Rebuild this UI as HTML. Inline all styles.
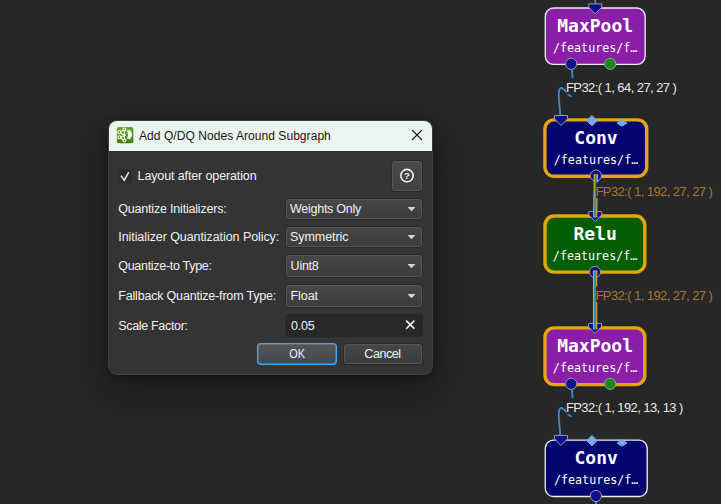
<!DOCTYPE html>
<html><head><meta charset="utf-8"><title>Add Q/DQ Nodes Around Subgraph</title>
<style>
html,body{margin:0;padding:0;}
body{width:721px;height:504px;background:#272727;overflow:hidden;position:relative;font-family:"Liberation Sans",sans-serif;}
svg{position:absolute;left:0;top:0;}
#dlg{position:absolute;left:109px;top:121px;width:322.6px;height:253.2px;background:#343434;border-radius:8px;overflow:hidden;box-shadow:0 0 0 1px rgba(72,72,72,.8),0 2px 8px rgba(0,0,0,.28),0 14px 40px 6px rgba(0,0,0,.36);}
#tb{position:absolute;left:0;top:0;right:0;height:29.7px;background:#ecf4f0;}
#dsvg text{font-family:"Liberation Sans",sans-serif;}
</style></head><body>
<svg id="graph" width="721" height="504" viewBox="0 0 721 504">
<g fill="none" stroke="#3b8bd0" stroke-width="1.8" stroke-linecap="round">
<path d="M595.2,0V5"/>
<path d="M571.2,64C571.8,69 572.3,74 572.7,78.2"/>
<path d="M570.8,96.3C567,94.5 564.3,87.8 561.4,87.8C559.1,87.8 558.5,92 558.8,96.7C559.2,103 560,110 560.3,117"/>
<path d="M571.2,384C571.8,389 572.3,394 572.7,398.2"/>
<path d="M570.8,416.3C567,414.5 564.3,407.8 561.4,407.8C559.1,407.8 558.5,412 558.8,416.7C559.2,423 560,430 560.3,437"/>
<path d="M596,496V504"/>
</g>
<rect x="545.27" y="8.03" width="99.85" height="56.30" rx="8.2" fill="#8b1ea9" stroke="#ececf0" stroke-width="1.35"/>
<rect x="544.90" y="119.85" width="101.80" height="56.45" rx="9.2" fill="#04046e" stroke="#e3a70a" stroke-width="3.4"/>
<rect x="545.00" y="216.05" width="99.80" height="56.05" rx="9.2" fill="#035e03" stroke="#e3a70a" stroke-width="3.4"/>
<rect x="545.00" y="327.85" width="99.80" height="56.75" rx="9.2" fill="#8b1ea9" stroke="#e3a70a" stroke-width="3.4"/>
<rect x="545.27" y="440.18" width="101.95" height="56.35" rx="8.2" fill="#04046e" stroke="#ececf0" stroke-width="1.35"/>
<path d="M588.8,3.9H601.7V7.2L595.2,13.9L588.8,7.2Z" fill="#0f0f8c" stroke="#9a9aa6" stroke-width="1"/>
<circle cx="571.2" cy="63.8" r="5.6" fill="#0f0f8c" stroke="#9a9aa6" stroke-width="1"/>
<circle cx="610.2" cy="63.8" r="5.6" fill="#138a13" stroke="#9a9aa6" stroke-width="1"/>
<path d="M554.5,115.5H567.5V118.9L561.0,125.5L554.5,118.9Z" fill="#0f0f8c" stroke="#9a9aa6" stroke-width="1"/>
<path d="M586.7,120.7L591.9,115.5L597.1,120.7L591.9,125.9Z" fill="#79a8e6" stroke="#79a8e6" stroke-width="1" stroke-linejoin="round"/>
<path d="M617.0,123.0L622.0,119.8L627.0,123.0L622.0,126.2Z" fill="#79a8e6" stroke="#79a8e6" stroke-width="1" stroke-linejoin="round"/>
<circle cx="595.9" cy="175.6" r="5.6" fill="#0f0f8c" stroke="#9a9aa6" stroke-width="1"/>
<path d="M588.8,211.5H601.7V214.9L595.2,221.6L588.8,214.9Z" fill="#0f0f8c" stroke="#9a9aa6" stroke-width="1"/>
<circle cx="595.0" cy="272" r="5.6" fill="#0f0f8c" stroke="#9a9aa6" stroke-width="1"/>
<path d="M588.5,323.4H601.5V326.8L595.0,333.6L588.5,326.8Z" fill="#0f0f8c" stroke="#9a9aa6" stroke-width="1"/>
<circle cx="571.2" cy="383.8" r="5.6" fill="#0f0f8c" stroke="#9a9aa6" stroke-width="1"/>
<circle cx="610.2" cy="383.8" r="5.6" fill="#138a13" stroke="#9a9aa6" stroke-width="1"/>
<path d="M554.5,435.4H567.5V438.8L561.0,445.6L554.5,438.8Z" fill="#0f0f8c" stroke="#9a9aa6" stroke-width="1"/>
<path d="M586.7,440.7L591.9,435.5L597.1,440.7L591.9,445.9Z" fill="#79a8e6" stroke="#79a8e6" stroke-width="1" stroke-linejoin="round"/>
<path d="M617.0,443.0L622.0,439.8L627.0,443.0L622.0,446.2Z" fill="#79a8e6" stroke="#79a8e6" stroke-width="1" stroke-linejoin="round"/>
<circle cx="595.9" cy="496.0" r="5.6" fill="#0f0f8c" stroke="#9a9aa6" stroke-width="1"/>
<path d="M595.9,174.2C595.9,190 595.2,200 595.2,217.6" stroke="#e3a70a" stroke-width="4.3" fill="none"/>
<path d="M595.9,174.2C595.9,190 595.2,200 595.2,217.6" stroke="#2f83d2" stroke-width="2" fill="none" stroke-dasharray="1000" stroke-dashoffset="-1"/>
<path d="M595.1,270.4V329.4" stroke="#e3a70a" stroke-width="4.3" fill="none"/>
<path d="M595.1,270.4V329.4" stroke="#2f83d2" stroke-width="2" fill="none" stroke-dasharray="1000" stroke-dashoffset="-1"/>
<g fill="#ffffff" text-anchor="middle" font-family="'DejaVu Sans Mono','Liberation Mono',monospace">
<text x="595.2" y="32.0" font-size="18" font-weight="bold">MaxPool</text>
<text x="595.2" y="51.6" font-size="11.7">/features/f…</text>
<text x="596.0" y="144.0" font-size="18" font-weight="bold">Conv</text>
<text x="596.0" y="163.5" font-size="11.7">/features/f…</text>
<text x="595.1" y="240.2" font-size="18" font-weight="bold">Relu</text>
<text x="595.1" y="259.7" font-size="11.7">/features/f…</text>
<text x="595.1" y="352.0" font-size="18" font-weight="bold">MaxPool</text>
<text x="595.1" y="371.5" font-size="11.7">/features/f…</text>
<text x="596.2" y="464.2" font-size="18" font-weight="bold">Conv</text>
<text x="596.2" y="483.7" font-size="11.7">/features/f…</text>
</g>
<rect x="566.5" y="78.3" width="111.0" height="15.7" fill="#272727"/>
<text x="565.9" y="92" font-size="13" textLength="111" lengthAdjust="spacing" fill="#e8e8e8" font-family="'Liberation Sans',sans-serif">FP32:( 1, 64, 27, 27 )</text>
<rect x="596.1" y="182.3" width="117.3" height="15.7" fill="#272727"/>
<text x="595.5" y="196" font-size="13" textLength="117.3" lengthAdjust="spacing" fill="#a9772c" font-family="'Liberation Sans',sans-serif">FP32:( 1, 192, 27, 27 )</text>
<rect x="596.1" y="286.3" width="117.3" height="15.7" fill="#272727"/>
<text x="595.5" y="300" font-size="13" textLength="117.3" lengthAdjust="spacing" fill="#a9772c" font-family="'Liberation Sans',sans-serif">FP32:( 1, 192, 27, 27 )</text>
<rect x="566.5" y="398.3" width="117.5" height="15.7" fill="#272727"/>
<text x="565.9" y="412" font-size="13" textLength="117.5" lengthAdjust="spacing" fill="#e8e8e8" font-family="'Liberation Sans',sans-serif">FP32:( 1, 192, 13, 13 )</text>
</svg>
<div id="dlg"><div id="tb"></div></div>
<svg id="dsvg" width="721" height="504" viewBox="0 0 721 504">
<defs><linearGradient id="gb" x1="0" y1="0" x2="0" y2="1"><stop offset="0" stop-color="#474747"/><stop offset="1" stop-color="#3c3c3c"/></linearGradient><linearGradient id="gok" x1="0" y1="0" x2="0" y2="1"><stop offset="0" stop-color="#52575c"/><stop offset="1" stop-color="#43484d"/></linearGradient><linearGradient id="gh" x1="0" y1="0" x2="0" y2="1"><stop offset="0" stop-color="#4a4a4a"/><stop offset="1" stop-color="#424242"/></linearGradient><linearGradient id="gi" x1="0" y1="0" x2="0" y2="1"><stop offset="0" stop-color="#6cab24"/><stop offset="1" stop-color="#3f8010"/></linearGradient></defs>
<rect x="116.9" y="126.9" width="16.5" height="16.4" rx="2" fill="url(#gi)"/>
<g stroke="#ffffff" stroke-width="1.15" fill="none"><path d="M124.4,129.4L119.4,132.3L124.4,135.5L119.4,137.3L124.4,140.4M124.4,129.4V140.4"/></g>
<g fill="#4a8a14" stroke="#ffffff" stroke-width="1.1"><circle cx="124.4" cy="129.4" r="1.4"/><circle cx="124.4" cy="140.4" r="1.4"/><circle cx="119.4" cy="132.3" r="1.5"/><circle cx="119.4" cy="137.3" r="1.5"/><circle cx="124.4" cy="135.3" r="0.8"/></g>
<path d="M126.4,129.9L128.4,130.8L129.5,129.7L130.9,130.7L130.3,132.1L131.8,132.5L131.8,136.7L130.3,137.1L130.9,138.5L129.5,139.5L128.4,138.4L126.4,139.3Q129.6,134.6 126.4,129.9Z" fill="#ffffff"/>
<text x="139.0" y="139.8" font-size="12" textLength="191.8" lengthAdjust="spacing" fill="#161616">Add Q/DQ Nodes Around Subgraph</text>
<path d="M412,130L422,140M422,130L412,140" stroke="#1a1a1a" stroke-width="1.1" fill="none"/>
<rect x="391.50" y="160.50" width="31.00" height="31.00" rx="3.5" fill="#565656" stroke="#2a2a2a" stroke-width="1"/><rect x="393.00" y="162.00" width="28.00" height="28.00" rx="2" fill="url(#gh)"/>
<circle cx="407" cy="175.6" r="6.2" fill="none" stroke="#f2f2f2" stroke-width="1.6"/>
<text x="407" y="179.3" font-size="9.5" font-weight="bold" text-anchor="middle" fill="#f0f0f0">?</text>
<rect x="118" y="169" width="14" height="14" fill="#2b2b2b"/>
<path d="M121,175.6L124.2,180.4L128.8,172.2" stroke="#ececec" stroke-width="1.5" fill="none"/>
<text x="137.6" y="179.7" font-size="12.5" textLength="119" lengthAdjust="spacing" fill="#f1f1f1">Layout after operation</text>
<text x="118.25" y="213" font-size="12.5" textLength="108.5" lengthAdjust="spacing" fill="#f1f1f1">Quantize Initializers:</text>
<text x="118.25" y="241.2" font-size="12.5" textLength="161" lengthAdjust="spacing" fill="#f1f1f1">Initializer Quantization Policy:</text>
<text x="118.25" y="270" font-size="12.5" textLength="93.75" lengthAdjust="spacing" fill="#f1f1f1">Quantize-to Type:</text>
<text x="118.25" y="300" font-size="12.5" textLength="158" lengthAdjust="spacing" fill="#f1f1f1">Fallback Quantize-from Type:</text>
<text x="118.25" y="330" font-size="12.5" textLength="69.75" lengthAdjust="spacing" fill="#f1f1f1">Scale Factor:</text>
<rect x="285.50" y="198.50" width="137.00" height="21.00" rx="3.5" fill="#565656" stroke="#2a2a2a" stroke-width="1"/><rect x="287.00" y="200.00" width="134.00" height="18.00" rx="2" fill="url(#gb)"/>
<path d="M407.5,207.0H415.5L411.5,211.2Z" fill="#d4d4d4"/>
<text x="290" y="212.8" font-size="12.5" textLength="71.25" lengthAdjust="spacing" fill="#f1f1f1">Weights Only</text>
<rect x="285.50" y="226.50" width="137.00" height="21.00" rx="3.5" fill="#565656" stroke="#2a2a2a" stroke-width="1"/><rect x="287.00" y="228.00" width="134.00" height="18.00" rx="2" fill="url(#gb)"/>
<path d="M407.5,235.0H415.5L411.5,239.2Z" fill="#d4d4d4"/>
<text x="290" y="241" font-size="12.5" textLength="58.5" lengthAdjust="spacing" fill="#f1f1f1">Symmetric</text>
<rect x="285.50" y="254.50" width="137.00" height="23.00" rx="3.5" fill="#565656" stroke="#2a2a2a" stroke-width="1"/><rect x="287.00" y="256.00" width="134.00" height="20.00" rx="2" fill="url(#gb)"/>
<path d="M407.5,264.0H415.5L411.5,268.2Z" fill="#d4d4d4"/>
<text x="290.6" y="270" font-size="12.5" textLength="28.2" lengthAdjust="spacing" fill="#f1f1f1">Uint8</text>
<rect x="285.50" y="284.50" width="137.00" height="23.00" rx="3.5" fill="#565656" stroke="#2a2a2a" stroke-width="1"/><rect x="287.00" y="286.00" width="134.00" height="20.00" rx="2" fill="url(#gb)"/>
<path d="M407.5,294.0H415.5L411.5,298.2Z" fill="#d4d4d4"/>
<text x="290.5" y="300" font-size="12.5" textLength="27.6" lengthAdjust="spacing" fill="#f1f1f1">Float</text>
<rect x="285" y="314" width="138" height="23" rx="3.5" fill="#282828"/>
<text x="291" y="330" font-size="12.5" textLength="23.8" lengthAdjust="spacing" fill="#f1f1f1">0.05</text>
<path d="M406.2,320.6L414.4,328.8M414.4,320.6L406.2,328.8" stroke="#f4f4f4" stroke-width="1.6" fill="none"/>
<rect x="257.5" y="343.5" width="79" height="21" rx="3.5" fill="#666b6e" stroke="#3fa6f4" stroke-width="1.15"/><rect x="259" y="345" width="76" height="18" rx="2" fill="url(#gok)"/>
<rect x="343.50" y="343.50" width="79.00" height="21.00" rx="3.5" fill="#565656" stroke="#2a2a2a" stroke-width="1"/><rect x="345.00" y="345.00" width="76.00" height="18.00" rx="2" fill="url(#gb)"/>
<text x="289.3" y="357.7" font-size="12.5" textLength="15.8" lengthAdjust="spacingAndGlyphs" fill="#f1f1f1">OK</text>
<text x="364.3" y="357.7" font-size="12.5" textLength="36.7" lengthAdjust="spacing" fill="#f1f1f1">Cancel</text>
</svg>
</body></html>
